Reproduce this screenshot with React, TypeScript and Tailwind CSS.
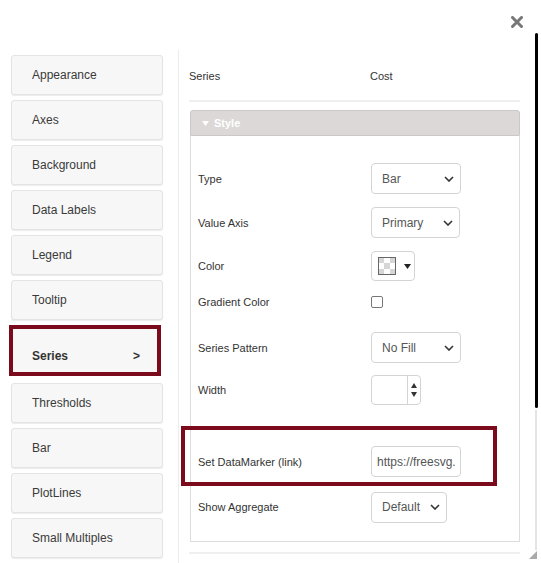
import React from "react";

const navItems = [
  "Appearance",
  "Axes",
  "Background",
  "Data Labels",
  "Legend",
  "Tooltip",
  "Series",
  "Thresholds",
  "Bar",
  "PlotLines",
  "Small Multiples",
];

function Chevron() {
  return (
    <svg width="10" height="6" viewBox="0 0 10 6" className="shrink-0">
      <path d="M1 1l4 4 4-4" fill="none" stroke="#333" strokeWidth="1.6" />
    </svg>
  );
}

function Select({ value, width }: { value: string; width: string }) {
  return (
    <div
      className={`${width} h-[31px] flex items-center justify-between pl-[10px] pr-[6px] border border-[#d4d4d4] rounded-[4px] bg-white text-[12px] text-[#555]`}
    >
      <span>{value}</span>
      <Chevron />
    </div>
  );
}

function ColorPicker() {
  const cells = [0, 1, 0, 1, 0, 1, 0, 1, 0];
  return (
    <div className="w-[44px] h-[30px] flex items-center gap-[8px] pl-[6px] border border-[#d4d4d4] rounded-[4px] bg-white">
      <div className="grid grid-cols-3 w-[18px] h-[18px] border border-[#666]">
        {cells.map((c, i) => (
          <div key={i} className={c ? "bg-white" : "bg-[#d6d6d6]"} />
        ))}
      </div>
      <svg width="7" height="5" viewBox="0 0 7 5">
        <path d="M0 0h7L3.5 5z" fill="#222" />
      </svg>
    </div>
  );
}

function Spinner() {
  return (
    <div className="w-[50px] h-[30px] flex border border-[#d4d4d4] rounded-[4px] bg-white">
      <div className="flex-1" />
      <div className="w-[13px] border-l border-[#d4d4d4] flex flex-col items-center justify-center gap-[4px]">
        <svg width="6" height="5" viewBox="0 0 6 5">
          <path d="M3 0l3 5H0z" fill="#333" />
        </svg>
        <svg width="6" height="5" viewBox="0 0 6 5">
          <path d="M0 0h6L3 5z" fill="#333" />
        </svg>
      </div>
    </div>
  );
}

function Row({
  label,
  className,
  children,
  highlight,
}: {
  label: string;
  className: string;
  children: React.ReactNode;
  highlight?: boolean;
}) {
  return (
    <div className={`relative flex items-center ${className}`}>
      {highlight && (
        <div className="absolute left-[-17px] right-[22px] top-[-20px] bottom-[-9px] border-[4px] border-[#7b0a1c]" />
      )}
      <div className="w-[173px] text-[11px] text-[#333] pt-[1px]">{label}</div>
      {children}
    </div>
  );
}

export default function App() {
  return (
    <div
      className="relative w-[541px] h-[563px] bg-white overflow-hidden"
      style={{ fontFamily: '"Liberation Sans", Arial, sans-serif' }}
    >
      <button className="absolute left-[511px] top-[16px] w-[12px] h-[12px]">
        <svg width="12" height="12" viewBox="0 0 12 12">
          <path d="M1.5 1.5l9 9M10.5 1.5l-9 9" stroke="#777" strokeWidth="3" strokeLinecap="round" />
        </svg>
      </button>

      <div className="flex h-full">
        <nav className="w-[178px] shrink-0 pl-[11px] pt-[55px] flex flex-col gap-[5px]">
          {navItems.map((item) =>
            item === "Series" ? (
              <div
                key={item}
                className="ml-[-2px] mb-[2px] w-[152px] h-[51px] border-[4px] border-[#7b0a1c] bg-[#f7f7f7] flex items-center justify-between pl-[19px] pr-[17px] pt-[10px] text-[12px] font-bold text-[#333]"
              >
                <span>Series</span>
                <span>&gt;</span>
              </div>
            ) : (
              <div
                key={item}
                className="w-[152px] h-[40px] flex items-center pl-[20px] bg-[#f7f7f7] border border-[#e4e4e4] rounded-[3px] shadow-[0_1px_1px_rgba(0,0,0,0.08)] text-[12px] text-[#3a3a3a]"
              >
                {item}
              </div>
            )
          )}
        </nav>

        <div className="mt-[50px] w-px shrink-0 bg-[#ececec]" />

        <main className="w-[341px] shrink-0 pl-[10px] pt-[62px]">
          <div className="flex items-center h-[28px] text-[11px] text-[#333]">
            <div className="w-[181px]">Series</div>
            <div>Cost</div>
          </div>
          <div className="mt-[10px] h-[2px] bg-[#efefef]" />

          <div className="mt-[8px] ml-[1px]">
            <div className="h-[26px] flex items-center gap-[5px] pl-[11px] bg-[#dcd8d7] border border-[#cbc8c8] rounded-t-[3px] text-[11px] font-bold text-white">
              <svg width="7" height="5" viewBox="0 0 7 5">
                <path d="M0 0h7L3.5 5z" fill="#fff" />
              </svg>
              <span>Style</span>
            </div>
            <div className="border border-t-0 border-[#ddd] pl-[7px] pt-[27px] pb-[19px] flex flex-col">
              <Row label="Type" className="h-[31px]">
                <Select value="Bar" width="w-[90px]" />
              </Row>
              <Row label="Value Axis" className="h-[31px] mt-[13px]">
                <Select value="Primary" width="w-[89px]" />
              </Row>
              <Row label="Color" className="h-[30px] mt-[13px]">
                <ColorPicker />
              </Row>
              <Row label="Gradient Color" className="h-[24px] mt-[9px]">
                <div className="w-[12px] h-[12px] border border-[#777] rounded-[2px] bg-white" />
              </Row>
              <Row label="Series Pattern" className="h-[31px] mt-[18px]">
                <Select value="No Fill" width="w-[90px]" />
              </Row>
              <Row label="Width" className="h-[30px] mt-[12px]">
                <Spinner />
              </Row>
              <Row label="Set DataMarker (link)" className="h-[31px] mt-[41px]" highlight>
                <div className="w-[90px] h-[31px] flex items-center pl-[5px] border border-[#d4d4d4] rounded-[4px] bg-white text-[12px] text-[#555] overflow-hidden whitespace-nowrap">
                  https://freesvg.
                </div>
              </Row>
              <Row label="Show Aggregate" className="h-[30px] mt-[15px]">
                <Select value="Default" width="w-[76px]" />
              </Row>
            </div>
          </div>
          <div className="mt-[10px] h-[2px] bg-[#efefef]" />
        </main>

        <div className="ml-[15px] w-[3px] shrink-0 pt-[33px] flex flex-col">
          <div className="h-[375px] bg-black rounded-full" />
          <div className="mt-[2px] h-[140px] w-[2px] bg-[#e4e4e4]" />
        </div>
      </div>

      <svg className="absolute left-[529px] top-[551px]" width="8" height="8" viewBox="0 0 8 8">
        <path d="M8 0v8H0z" fill="#aaa" />
      </svg>
    </div>
  );
}
